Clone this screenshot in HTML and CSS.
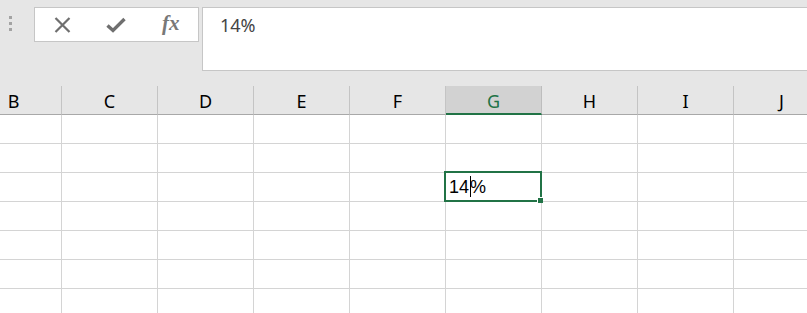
FILE: index.html
```html
<!DOCTYPE html>
<html lang="en">
<head>
  <meta charset="utf-8" />
  <title>Sheet</title>
  <link rel="stylesheet" href="styles.css">
</head>
<body>
<div class="fbar">
  <div class="grip"><i></i><i></i><i></i></div>
  <div class="btns">
    <span class="btn">
      <svg width="17" height="16" viewBox="0 0 17 16"><path d="M1.5 1 L15.5 15 M15.5 1 L1.5 15" stroke="#6f6f6f" stroke-width="2.2" fill="none"/></svg>
    </span>
    <span class="btn">
      <svg width="20" height="16" viewBox="0 0 20 16"><path d="M1.5 8.5 L7 13.5 L18.5 2" stroke="#6f6f6f" stroke-width="3.4" fill="none"/></svg>
    </span>
    <span class="btn fx">fx</span>
  </div>
  <div class="input">14%</div>
</div>

<div class="sheet">
  <div class="grid">
    <div class="hd">B</div>
    <div class="hd">C</div>
    <div class="hd">D</div>
    <div class="hd">E</div>
    <div class="hd">F</div>
    <div class="hd on">G</div>
    <div class="hd">H</div>
    <div class="hd">I</div>
    <div class="hd">J</div>
  </div>
  <div class="grid body" id="rows"></div>
</div>
<script>
  // 7 visible rows x 9 columns, active cell is G3
  var rows = document.getElementById('rows');
  for (var r = 0; r < 7; r++) {
    for (var c = 0; c < 9; c++) {
      var cell = document.createElement('div');
      cell.className = 'cell';
      if (r == 2 && c == 5) {
        cell.className = 'cell active';
        cell.innerHTML = '14<span class="caret"></span>%<span class="sel"><span class="handle"></span></span>';
      }
      rows.appendChild(cell);
    }
  }
</script>
</body>
</html>
```

FILE: styles.css
```css
*{margin:0;padding:0;box-sizing:border-box;}
body{background:#e6e6e6;width:807px;height:313px;overflow:hidden;font-family:"Segoe UI","Noto Sans",sans-serif;}

.fbar{display:flex;align-items:flex-start;padding-top:7px;height:86px;}
.grip{width:34px;padding:9px 0 0 9px;display:flex;flex-direction:column;gap:3px;}
.grip i{display:block;width:3px;height:3px;background:#a3a3a3;}
.btns{width:165px;height:35px;background:#fff;border:1px solid #c6c6c6;display:flex;}
.btn{flex:1;display:flex;align-items:center;justify-content:center;}
.fx{font-family:"Liberation Serif",serif;font-style:italic;font-weight:bold;font-size:21px;color:#787878;padding-bottom:2px;}
.input{flex:1;margin-left:3px;height:64px;background:#fff;border:1px solid #c6c6c6;border-right:none;padding:5px 0 0 17px;font-size:18px;line-height:24px;color:#444;}

.sheet{overflow:hidden;}
.grid{display:grid;grid-template-columns:repeat(9,96px);margin-left:-34px;}
.hd{height:29px;padding-top:3px;line-height:24px;font-size:18px;text-align:center;color:#000;border-right:1px solid #c4c4c4;border-bottom:1px solid #a8a8a8;}
.hd.on{background:#d2d2d2;color:#217346;border-bottom:2px solid #217346;border-right-color:#bdbdbd;}

.cell{height:29px;border-right:1px solid #d4d4d4;border-bottom:1px solid #d4d4d4;background:#fff;font-family:"Liberation Sans",sans-serif;font-size:18px;line-height:29px;padding-left:3px;color:#000;}
.active{position:relative;}
.caret{display:inline-block;width:1px;height:21px;background:#000;vertical-align:-4px;margin:0 -1px 0 1px;}
.sel{position:absolute;left:-2px;top:-2px;right:-1px;bottom:-1px;border:2px solid #217346;}
.handle{position:absolute;right:-3px;bottom:-3px;width:6px;height:6px;background:#217346;border-left:1px solid #fff;border-top:1px solid #fff;}
```
